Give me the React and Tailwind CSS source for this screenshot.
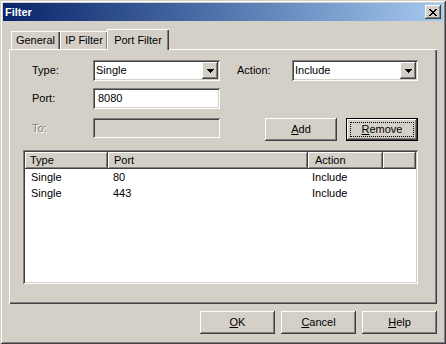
const raised =
  "shadow-[inset_-1px_-1px_#404040,inset_1px_1px_#ffffff,inset_-2px_-2px_#808080,inset_2px_2px_#d4d0c8]";
const sunken =
  "shadow-[inset_1px_1px_#808080,inset_-1px_-1px_#ffffff,inset_2px_2px_#404040,inset_-2px_-2px_#d4d0c8]";

function CloseGlyph() {
  const px = [
    [0, 0], [1, 0], [6, 0], [7, 0],
    [1, 1], [2, 1], [5, 1], [6, 1],
    [2, 2], [3, 2], [4, 2], [5, 2],
    [3, 3], [4, 3],
    [2, 4], [3, 4], [4, 4], [5, 4],
    [1, 5], [2, 5], [5, 5], [6, 5],
    [0, 6], [1, 6], [6, 6], [7, 6],
  ];
  return (
    <svg width="8" height="7" viewBox="0 0 8 7" shapeRendering="crispEdges">
      {px.map(([x, y], i) => (
        <rect key={i} x={x} y={y} width="1" height="1" fill="#000" />
      ))}
    </svg>
  );
}

function Arrow() {
  return (
    <svg width="7" height="4" viewBox="0 0 7 4" shapeRendering="crispEdges">
      <rect x="0" y="0" width="7" height="1" fill="#000" />
      <rect x="1" y="1" width="5" height="1" fill="#000" />
      <rect x="2" y="2" width="3" height="1" fill="#000" />
      <rect x="3" y="3" width="1" height="1" fill="#000" />
    </svg>
  );
}

function Combo({ value, width }) {
  return (
    <div className={`flex h-[21px] items-center bg-white p-[2px] ${sunken}`} style={{ width }}>
      <span className="flex-1 pl-[1px] leading-none">{value}</span>
      <div className={`flex h-[17px] w-[16px] items-center justify-center bg-[#d4d0c8] ${raised}`}>
        <Arrow />
      </div>
    </div>
  );
}

function Button({ children, width = 75, focused = false }) {
  if (focused) {
    return (
      <div className="border border-black" style={{ width, height: 23 }}>
        <div className={`flex h-full w-full items-center justify-center bg-[#d4d0c8] p-[3px] ${raised}`}>
          <div className="flex h-full w-full items-center justify-center border border-dotted border-black">
            {children}
          </div>
        </div>
      </div>
    );
  }
  return (
    <div
      className={`flex items-center justify-center bg-[#d4d0c8] ${raised}`}
      style={{ width, height: 23 }}
    >
      {children}
    </div>
  );
}

const rows = [
  { type: "Single", port: "80", action: "Include" },
  { type: "Single", port: "443", action: "Include" },
];

export default function App() {
  return (
    <div className="h-[344px] w-[446px] bg-[#d4d0c8] font-['Liberation_Sans',Arial,sans-serif] text-[11px] text-black">
      <div className="flex h-full w-full flex-col p-[3px] shadow-[inset_1px_1px_#d4d0c8,inset_-1px_-1px_#404040,inset_2px_2px_#ffffff,inset_-2px_-2px_#808080]">
        {/* Title bar */}
        <div className="flex h-[18px] items-center justify-between bg-linear-to-r from-[#0a246a] to-[#a6caf0] pl-[2px] pr-[2px]">
          <span className="font-bold text-white">Filter</span>
          <div className={`flex h-[14px] w-[16px] items-center justify-center bg-[#d4d0c8] ${raised}`}>
            <CloseGlyph />
          </div>
        </div>

        {/* Body */}
        <div className="flex flex-1 flex-col px-[6px] pt-[8px]">
          {/* Tabs */}
          <div className="flex h-[20px] items-end pl-[2px]">
            <div className="flex h-[18px] w-[49px] items-center justify-center shadow-[inset_1px_1px_#ffffff,inset_-1px_0_#404040,inset_-2px_0_#808080]">
              General
            </div>
            <div className="flex h-[18px] w-[48px] items-center justify-center shadow-[inset_1px_1px_#ffffff,inset_-1px_0_#404040,inset_-2px_0_#808080]">
              IP Filter
            </div>
            <div className="relative z-10 -mb-[1px] -ml-[1px] flex h-[21px] w-[62px] items-start justify-center bg-[#d4d0c8] pt-[3px] shadow-[inset_1px_1px_#ffffff,inset_-1px_0_#404040,inset_-2px_0_#808080]">
              Port Filter
            </div>
          </div>

          {/* Panel */}
          <div className="h-[255px] w-[428px] pl-[14px] pt-[11px] shadow-[inset_1px_1px_#ffffff,inset_-1px_-1px_#404040,inset_-2px_-2px_#808080]">
            <div className="flex items-center">
              <span className="w-[70px] pl-[9px]">Type:</span>
              <Combo value="Single" width={127} />
              <span className="ml-[17px] w-[55px]">Action:</span>
              <Combo value="Include" width={126} />
            </div>

            <div className="mt-[7px] flex items-center">
              <span className="w-[70px] pl-[9px]">Port:</span>
              <div className={`flex h-[21px] w-[127px] items-center bg-white pl-[5px] ${sunken}`}>8080</div>
            </div>

            <div className="mt-[9px] flex items-start">
              <span className="flex h-[20px] w-[70px] items-center pl-[9px] text-[#808080] [text-shadow:1px_1px_#ffffff]">
                To:
              </span>
              <div className={`h-[20px] w-[127px] bg-[#d4d0c8] ${sunken}`} />
              <div className="ml-[45px]">
                <Button width={72}>
                  <span><u>A</u>dd</span>
                </Button>
              </div>
              <div className="ml-[9px]">
                <Button width={72} focused>
                  <span><u>R</u>emove</span>
                </Button>
              </div>
            </div>

            {/* List */}
            <div className={`mt-[9px] flex h-[134px] w-[395px] flex-col bg-white p-[2px] ${sunken}`}>
              <div className="flex h-[17px]">
                <div className={`flex w-[83px] items-center bg-[#d4d0c8] pl-[5px] ${raised}`}>Type</div>
                <div className={`flex w-[200px] items-center bg-[#d4d0c8] pl-[6px] ${raised}`}>Port</div>
                <div className={`flex w-[75px] items-center bg-[#d4d0c8] pl-[7px] ${raised}`}>Action</div>
                <div className={`flex-1 bg-[#d4d0c8] ${raised}`} />
              </div>
              {rows.map((r, i) => (
                <div key={i} className="flex h-[16px] items-center">
                  <span className="w-[83px] pl-[6px]">{r.type}</span>
                  <span className="w-[200px] pl-[5px]">{r.port}</span>
                  <span className="pl-[4px]">{r.action}</span>
                </div>
              ))}
            </div>
          </div>

          {/* Dialog buttons */}
          <div className="mt-[7px] flex justify-end gap-[6px]">
            <Button><span><u>O</u>K</span></Button>
            <Button><span><u>C</u>ancel</span></Button>
            <Button><span><u>H</u>elp</span></Button>
          </div>
        </div>
      </div>
    </div>
  );
}
